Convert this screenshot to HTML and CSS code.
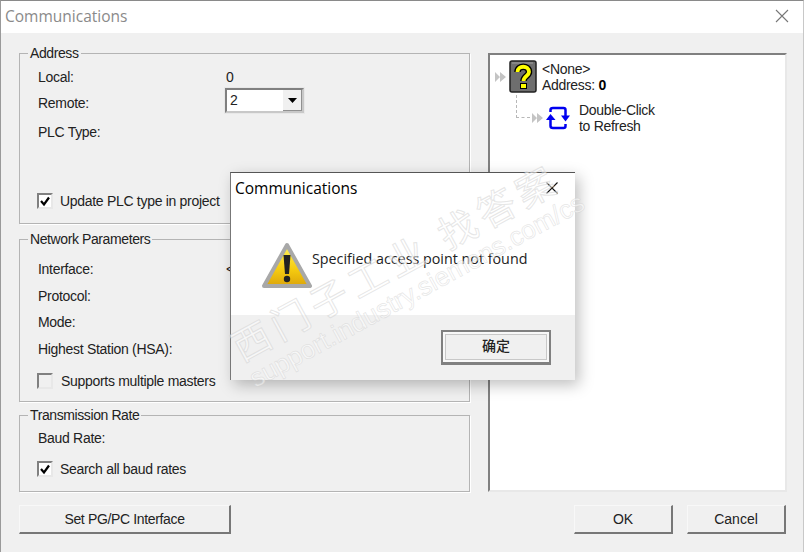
FILE: index.html
```html
<!DOCTYPE html>
<html lang="en">
<head>
    <meta charset="UTF-8">
    <title>Communications</title>
    <link rel="stylesheet" href="styles.css">
</head>
<body>
    <div class="window">
        <div class="titlebar">
            <span class="title">Communications</span>
            <svg class="close" width="14" height="14" viewBox="0 0 14 14"><path d="M1 1L13 13M13 1L1 13" stroke="#777" stroke-width="1.1" fill="none"/></svg>
        </div>
        <div class="content">
            <div class="left">
                <fieldset class="group group-address">
                    <legend>Address</legend>
                    <div class="row row-local"><span class="label">Local:</span><span class="value">0</span></div>
                    <div class="row row-remote">
                        <span class="label">Remote:</span>
                        <div class="combo">
                            <span class="combo-text">2</span>
                            <span class="combo-btn"><svg width="9" height="5" viewBox="0 0 9 5"><path d="M0 0H9L4.500 5Z" fill="#000"/></svg></span>
                        </div>
                    </div>
                    <div class="row row-plc"><span class="label">PLC Type:</span></div>
                    <label class="check check-update">
                        <span class="box"><svg width="12" height="12" viewBox="0 0 12 12"><path d="M2 6L5 9.500L10 2.500" stroke="#000" stroke-width="2.200" fill="none"/></svg></span>
                        <span>Update PLC type in project</span>
                    </label>
                </fieldset>
                <fieldset class="group group-network">
                    <legend>Network Parameters</legend>
                    <div class="row"><span class="label">Interface:</span><span class="value value-iface">&lt;</span></div>
                    <div class="row"><span class="label">Protocol:</span></div>
                    <div class="row"><span class="label">Mode:</span></div>
                    <div class="row"><span class="label">Highest Station (HSA):</span></div>
                    <label class="check check-masters">
                        <span class="box box-off"></span>
                        <span>Supports multiple masters</span>
                    </label>
                </fieldset>
                <fieldset class="group group-rate">
                    <legend>Transmission Rate</legend>
                    <div class="row"><span class="label">Baud Rate:</span></div>
                    <label class="check check-baud">
                        <span class="box"><svg width="12" height="12" viewBox="0 0 12 12"><path d="M2 6L5 9.500L10 2.500" stroke="#000" stroke-width="2.200" fill="none"/></svg></span>
                        <span>Search all baud rates</span>
                    </label>
                </fieldset>
            </div>
            <div class="tree">
                <div class="node node-top">
                    <svg class="chev" width="12" height="12" viewBox="0 0 12 12"><path d="M0 1L5 6L0 11ZM5 1L11 6L5 11Z" fill="#c4c4c4"/></svg>
                    <svg class="help" width="28" height="33" viewBox="0 0 28 33">
                        <rect x="1" y="1" width="26" height="31" rx="2" fill="#6e6e6e" stroke="#222" stroke-width="1.500"/>
                        <path d="M3 3H24" stroke="#a0a0a0" stroke-width="1"/>
                        <path d="M8.500 12C8.500 5 20 5 20 12C20 16 14.500 16 14.500 21" fill="none" stroke="#000" stroke-width="6.500"/>
                        <path d="M8.500 12C8.500 5 20 5 20 12C20 16 14.500 16 14.500 21" fill="none" stroke="#ffff00" stroke-width="3.800"/>
                        <rect x="11.500" y="23.500" width="6" height="5" fill="#ffff00" stroke="#000"/>
                    </svg>
                    <div class="node-text"><div>&lt;None&gt;</div><div>Address: <b>0</b></div></div>
                </div>
                <div class="node node-sub">
                    <span class="dash"></span>
                    <svg class="chev" width="12" height="12" viewBox="0 0 12 12"><path d="M0 1L5 6L0 11ZM5 1L11 6L5 11Z" fill="#c4c4c4"/></svg>
                    <svg class="refresh" width="24" height="24" viewBox="0 0 24 24">
                        <path d="M4.500 6V4Q4.500 2 7 2H17.500Q19.500 2 19.500 4V10" fill="none" stroke="#0000f0" stroke-width="2.500"/>
                        <path d="M19.500 18V20Q19.500 22 17.500 22H7Q4.500 22 4.500 20V13" fill="none" stroke="#0000f0" stroke-width="2.500"/>
                        <path d="M0 14H9.500L4.500 8Z" fill="#0000f0"/>
                        <path d="M15 9.500H24L19.500 15.500Z" fill="#0000f0"/>
                    </svg>
                    <div class="node-text"><div>Double-Click</div><div>to Refresh</div></div>
                </div>
            </div>
        </div>
        <div class="footer">
            <button class="btn btn-wide">Set PG/PC Interface</button>
            <div class="footer-right">
                <button class="btn">OK</button>
                <button class="btn">Cancel</button>
            </div>
        </div>
    </div>

    <div class="dialog">
        <div class="dialog-title">
            <span>Communications</span>
            <svg width="12" height="12" viewBox="0 0 12 12"><path d="M0.500 0.500L11.500 11.500M11.500 0.500L0.500 11.500" stroke="#111" stroke-width="1.100" fill="none"/></svg>
        </div>
        <div class="dialog-body">
            <svg class="warn" width="52" height="48" viewBox="0 0 52 48">
                <defs>
                    <linearGradient id="warnFill" x1="0" y1="0" x2="0" y2="1">
                        <stop offset="0" stop-color="#fff25a"/>
                        <stop offset="0.600" stop-color="#f5cb10"/>
                        <stop offset="1" stop-color="#dca50a"/>
                    </linearGradient>
                </defs>
                <path d="M26 3L49 44H3Z" fill="url(#warnFill)" stroke="#a8a8a8" stroke-width="4" stroke-linejoin="round"/>
                <path d="M22.500 13H29.500L28 32H24Z" fill="#222"/>
                <circle cx="26" cy="37" r="3.200" fill="#222"/>
            </svg>
            <span class="message">Specified access point not found</span>
        </div>
        <div class="dialog-foot">
            <button class="btn btn-confirm">确定</button>
        </div>
    </div>

    <div class="watermark">
        <div class="wm-cn">西门子工业 找答案</div>
        <div class="wm-en">support.industry.siemens.com/cs</div>
    </div>
</body>
</html>
```

FILE: styles.css
```css
html, body {
    margin: 0;
    height: 100%;
}
body {
    position: relative;
    width: 804px;
    height: 552px;
    overflow: hidden;
    font-family: "Liberation Sans", Arial, sans-serif;
    font-size: 14px;
    color: #222;
    background-color: #f0f0f0;
}
.window {
    height: 552px;
    box-sizing: border-box;
    border-top: 1px solid #8a8a8a;
    border-left: 1px solid #9a9a9a;
    border-right: 1px solid #c8c8c8;
    display: flex;
    flex-direction: column;
}
.titlebar {
    height: 32px;
    flex: none;
    box-sizing: border-box;
    background-color: #fff;
    display: flex;
    align-items: center;
    justify-content: space-between;
    padding: 0 14px 3px 4px;
}
.title {
    font-family: "Open Sans", sans-serif;
    font-size: 15.500px;
    color: #8a8a8a;
}
.content {
    display: flex;
    justify-content: space-between;
    padding: 12px 16px 0 18px;
}
.left {
    width: 451px;
}
.group {
    margin: 0;
    padding: 0 0 0 18px;
    border: 1px solid #b4b4b4;
    box-shadow: 1px 1px 0 #fff;
    box-sizing: border-box;
}
.group legend {
    margin-left: -10px;
    padding: 0 2px;
    font-size: 14px;
    line-height: 16px;
    letter-spacing: -0.400px;
}
.group-address {
    height: 179px;
}
.group-network {
    height: 171px;
    margin-top: 7px;
    padding-top: 9px;
}
.group-rate {
    height: 85px;
    margin-top: 5px;
    padding-top: 2px;
}
.row {
    display: flex;
    height: 26.500px;
    align-items: center;
}
.label {
    width: 188px;
    font-size: 14px;
    letter-spacing: -0.300px;
}
.value {
    font-size: 14px;
}
.row-local {
    height: 17px;
    margin-top: 7px;
}
.row-remote {
    height: 26px;
    margin-top: 2px;
}
.row-remote .label {
    padding-top: 5px;
}
.row-plc {
    height: 26px;
    margin-top: 6px;
}
.combo {
    width: 79px;
    height: 25px;
    margin-left: -1px;
    box-sizing: border-box;
    border: 2px solid;
    border-color: #808080 #c8c8c8 #c8c8c8 #808080;
    outline: 1px solid #e8e8e8;
    background-color: #fff;
    display: flex;
    justify-content: space-between;
    align-items: center;
}
.combo-text {
    padding-left: 3px;
}
.combo-btn {
    width: 19px;
    height: 21px;
    background-color: #f0f0f0;
    display: flex;
    align-items: center;
    justify-content: center;
    box-shadow: inset -1px -1px 0 #909090;
}
.check {
    display: flex;
    align-items: center;
    letter-spacing: -0.300px;
}
.box {
    width: 12px;
    height: 12px;
    flex: none;
    margin: 0 7px 0 -1px;
    border: 2px solid;
    border-color: #808080 #e8e8e8 #e8e8e8 #808080;
    background-color: #fff;
    display: flex;
    align-items: center;
    justify-content: center;
}
.box-off {
    background-color: #f0f0f0;
    margin-right: 8px;
}
.check-update {
    margin-top: 48px;
}
.check-masters {
    margin-top: 11px;
}
.check-baud {
    margin-top: 9px;
}
.tree {
    width: 299px;
    height: 439px;
    margin-top: 8px;
    box-sizing: border-box;
    background-color: #fff;
    border: 2px solid;
    border-color: #808080 #e8e8e8 #e8e8e8 #808080;
    padding: 5px 0 0 5px;
    font-size: 14px;
    letter-spacing: -0.300px;
    line-height: 16px;
}
.node {
    display: flex;
    align-items: center;
}
.node-text {
    color: #222;
}
.node-text b {
    color: #000;
}
.help {
    margin: 0 5px 0 2px;
}
.node-sub {
    position: relative;
    margin: 9px 0 0 32px;
}
.node-sub .chev {
    margin-left: 5px;
}
.dash {
    position: absolute;
    left: -11px;
    top: -7px;
    width: 14px;
    height: 23px;
    box-sizing: border-box;
    border-left: 1px dashed #b8b8b8;
    border-bottom: 1px dashed #b8b8b8;
}
.refresh {
    margin: 0 9px 0 2px;
}
.footer {
    display: flex;
    justify-content: space-between;
    padding: 13px 17px 0 18px;
}
.footer-right {
    display: flex;
    gap: 14px;
}
.btn {
    width: 99px;
    height: 29px;
    box-sizing: border-box;
    background-color: #f0f0f0;
    border: 1px solid #f8f8f8;
    border-right: 2px solid #777;
    border-bottom: 2px solid #777;
    font-family: "Liberation Sans", Arial, sans-serif;
    font-size: 14px;
    color: #222;
    padding: 0;
}
.btn-wide {
    width: 212px;
    letter-spacing: -0.350px;
}
.dialog {
    position: absolute;
    left: 230px;
    top: 172px;
    width: 345px;
    height: 208px;
    box-sizing: border-box;
    background-color: #fff;
    border-top: 1px solid #555;
    border-left: 1px solid #777;
    box-shadow: 4px 5px 14px rgba(0, 0, 0, 0.25);
    display: flex;
    flex-direction: column;
}
.dialog-title {
    height: 30px;
    display: flex;
    align-items: center;
    justify-content: space-between;
    padding: 0 17px 0 4px;
    font-family: "Open Sans", sans-serif;
    font-size: 15.500px;
    color: #000;
}
.dialog-body {
    height: 112px;
    display: flex;
    align-items: flex-start;
    box-sizing: border-box;
    padding: 39px 0 0 30px;
}
.message {
    font-family: "Open Sans", sans-serif;
    font-size: 14.300px;
    color: #222;
    margin: 7px 0 0 -1px;
}
.dialog-foot {
    flex: 1;
    background-color: #f0f0f0;
    display: flex;
    justify-content: flex-end;
    align-items: flex-start;
    padding: 15px 24px 0 0;
}
.btn-confirm {
    width: 110px;
    height: 35px;
    border: 2px solid #808080;
    border-bottom-width: 3px;
    box-shadow: inset 0 0 0 2px #f8f8f8, inset 0 0 0 3px #c8c8c8;
    font-family: "Noto Sans CJK SC", sans-serif;
    font-size: 14px;
    font-weight: 500;
    padding-bottom: 5px;
    line-height: 20px;
}
.watermark {
    position: absolute;
    left: 224px;
    top: 330px;
    transform: rotate(-28.500deg);
    transform-origin: left top;
    white-space: nowrap;
    pointer-events: none;
    color: rgba(255, 255, 255, 0.5);
    -webkit-text-stroke: 1px rgba(205, 205, 205, 0.5);
}
.wm-cn {
    font-family: "Noto Sans CJK SC", sans-serif;
    font-size: 38px;
    line-height: 42px;
    letter-spacing: 6px;
}
.wm-en {
    font-family: "Liberation Sans", sans-serif;
    font-size: 26px;
    line-height: 30px;
    -webkit-text-stroke-width: 0.700px;
}
```
